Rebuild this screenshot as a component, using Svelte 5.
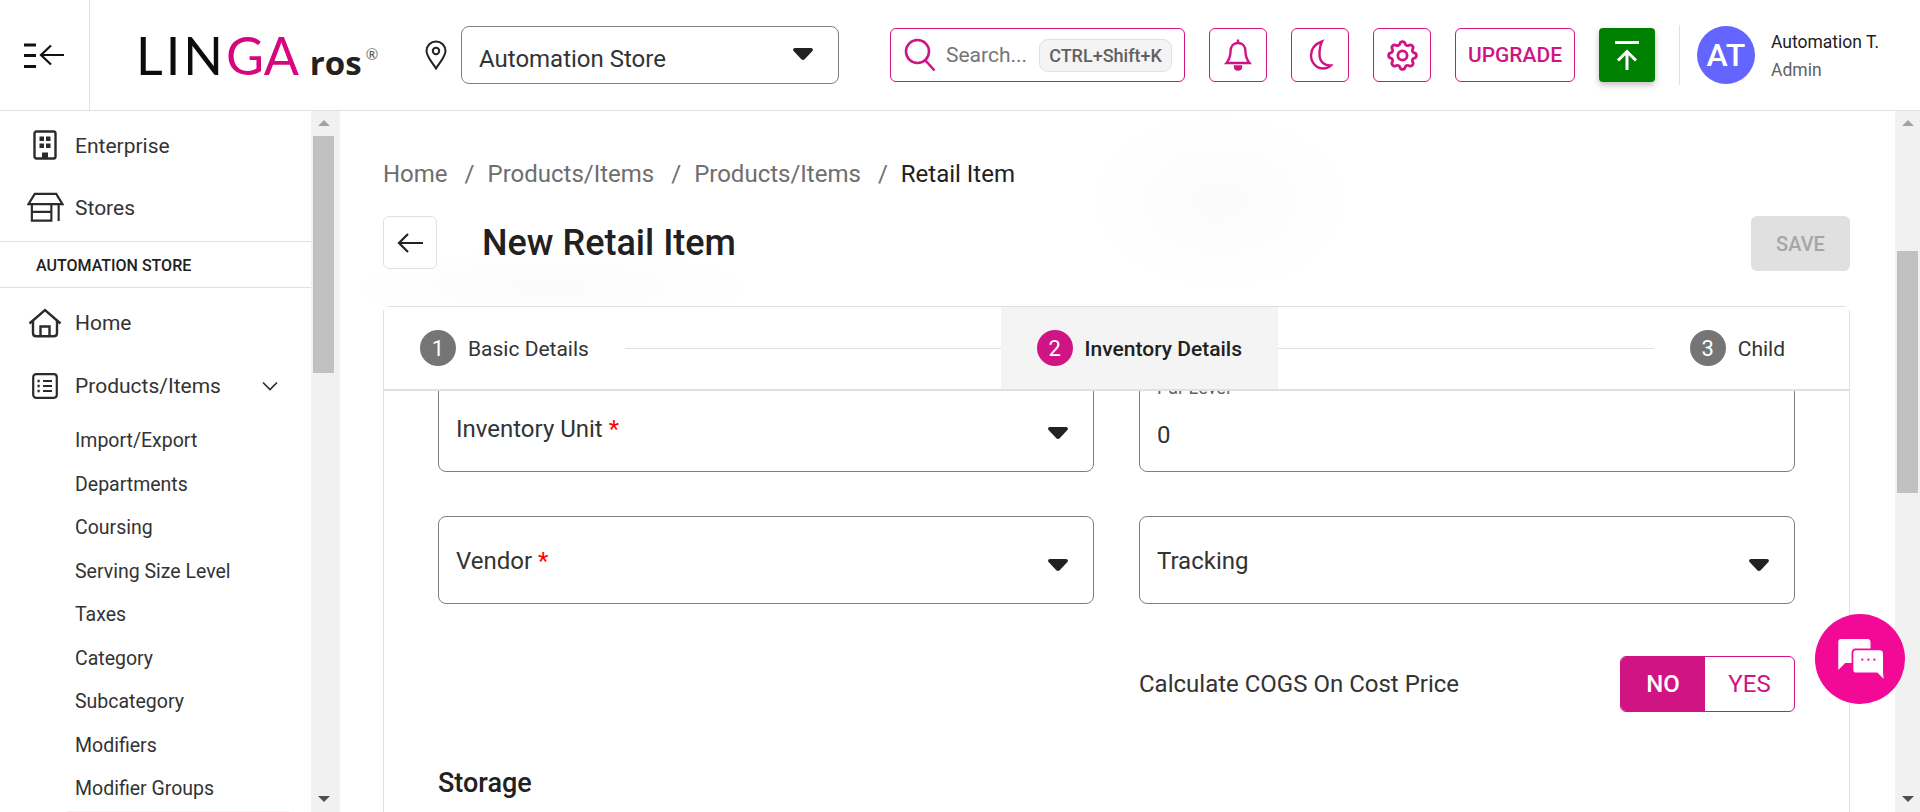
<script>
  const topItems = [
    { name: 'Enterprise', icon: 'building' },
    { name: 'Stores', icon: 'store' },
  ];
  const subItems = ['Import/Export', 'Departments', 'Coursing', 'Serving Size Level', 'Taxes', 'Category', 'Subcategory', 'Modifiers', 'Modifier Groups'];
  const crumbs = ['Home', 'Products/Items', 'Products/Items'];
</script>

<div class="app">
  <!-- Header -->
  <header class="header">
    <div class="menu-cell">
      <svg width="42" height="26" viewBox="0 0 42 26" fill="none" stroke="#111" stroke-width="2.2">
        <path d="M1 3h12M1 13.500h12M1 24.500h12" stroke-width="3"/>
        <path d="M41 13H18.500M28 3.500L18 13l10 9.500"/>
      </svg>
    </div>
    <div class="logo"><span class="logo-black">LIN</span><span class="logo-pink">GA</span><span class="logo-ros">ros</span><span class="logo-reg">®</span></div>
    <svg class="pin" width="24" height="30" viewBox="0 0 24 30" fill="none" stroke="#222" stroke-width="2">
      <path d="M12 28.500C8 22 2.500 16.500 2.500 11a9.500 9.500 0 0 1 19 0c0 5.500-5.500 11-9.500 17.500z"/>
      <circle cx="12" cy="11" r="3.200"/>
    </svg>
    <div class="store-select">
      <span class="store-name">Automation Store</span>
      <svg class="caret" width="20" height="12" viewBox="0 0 20 12"><path d="M2 0h16c1.700 0 2.500 1.600 1.400 2.900l-7.700 8.300c-.9 1-2.500 1-3.400 0L.6 2.900C-.5 1.600.3 0 2 0z" fill="#222"/></svg>
    </div>
    <div class="search">
      <svg width="34" height="34" viewBox="0 0 34 34" fill="none" stroke="#d01484" stroke-width="2.600">
        <circle cx="14.500" cy="13.500" r="11.500"/><path d="M22.500 22.500l9 10"/>
      </svg>
      <span class="search-text">Search...</span>
      <span class="kbd">CTRL+Shift+K</span>
    </div>
    <button class="icon-btn">
      <svg width="30" height="34" viewBox="0 0 30 34" fill="none" stroke="#d01484" stroke-width="2.400">
        <path d="M15 5c-5 0-7.500 4-7.500 8.500 0 6-2 9-4 11.500h23c-2-2.500-4-5.500-4-11.500C22.500 9 20 5 15 5z"/>
        <path d="M15 1.500V5" /><path d="M12 28.500h6c0 4-6 4-6 0z" fill="#d01484"/>
      </svg>
    </button>
    <button class="icon-btn">
      <svg width="26" height="32" viewBox="0 0 26 32" fill="none" stroke="#d01484" stroke-width="2.400">
        <path d="M15 2.500C8 5 4 10 4 16.500 4 24 10 29.500 16 29.500c3.500 0 6-1 8-3-6 .5-11.500-3.500-11.500-11 0-5 .5-9 2.500-13z"/>
      </svg>
    </button>
    <button class="icon-btn">
      <svg width="37" height="37" viewBox="0 0 24 24" fill="none" stroke="#d01484" stroke-width="1.800">
        <path d="M10.325 4.317c.426 -1.756 2.924 -1.756 3.350 0a1.724 1.724 0 0 0 2.573 1.066c1.543 -.94 3.310 .826 2.370 2.370a1.724 1.724 0 0 0 1.065 2.572c1.756 .426 1.756 2.924 0 3.350a1.724 1.724 0 0 0 -1.066 2.573c.94 1.543 -.826 3.310 -2.370 2.370a1.724 1.724 0 0 0 -2.572 1.065c-.426 1.756 -2.924 1.756 -3.350 0a1.724 1.724 0 0 0 -2.573 -1.066c-1.543 .94 -3.310 -.826 -2.370 -2.370a1.724 1.724 0 0 0 -1.065 -2.572c-1.756 -.426 -1.756 -2.924 0 -3.350a1.724 1.724 0 0 0 1.066 -2.573c-.94 -1.543 .826 -3.310 2.370 -2.370c1 .608 2.296 .07 2.572 -1.065z"/>
        <circle cx="12" cy="12" r="3"/>
      </svg>
    </button>
    <button class="upgrade">UPGRADE</button>
    <button class="publish">
      <svg width="26" height="30" viewBox="0 0 26 30" fill="none" stroke="#fff" stroke-width="3">
        <path d="M1 2.500h24"/><path d="M13 30V11M4 20.500L13 11.500l9 9"/>
      </svg>
    </button>
    <div class="vr"></div>
    <div class="avatar">AT</div>
    <div class="user">
      <div class="user-name">Automation T.</div>
      <div class="user-role">Admin</div>
    </div>
  </header>

  <div class="body">
    <!-- Sidebar -->
    <aside class="sidebar">
      <nav class="nav">
        {#each topItems as item}
          <div class="nav-row">
            <span class="nav-icon">
              {#if item.icon === 'building'}
                <svg width="24" height="30" viewBox="0 0 24 30" fill="none" stroke="#2b2b2b" stroke-width="2.400">
                  <rect x="1.500" y="1.500" width="21" height="27" rx="2"/>
                  <path d="M6.500 6.500h4.500v4.500H6.500zM13 6.500h4.500v4.500H13zM6.500 13.500h4.500v4.500H6.500zM13 13.500h4.500v4.500H13zM9 28.500V22.500h6v6z" fill="#2b2b2b" stroke="none"/>
                </svg>
              {:else}
                <svg width="37" height="30" viewBox="0 0 38 30" fill="none" stroke="#2b2b2b" stroke-width="2.200">
                  <path d="M8 1.500h22l6.500 10.500h-35z"/>
                  <path d="M5 12v17h20V12M5 20h20M32.500 12v17.500"/>
                </svg>
              {/if}
            </span>
            <span class="nav-text">{item.name}</span>
          </div>
        {/each}
        <div class="nav-section">AUTOMATION STORE</div>
        <div class="nav-row tall">
          <span class="nav-icon">
            <svg width="34" height="30" viewBox="0 0 34 30" fill="none" stroke="#2b2b2b" stroke-width="2.400">
              <path d="M1.500 15.500L17 2l15.500 13.500"/>
              <path d="M5 12.500V25c0 2 1.200 3.300 3.300 3.300h17.400c2.100 0 3.300-1.300 3.300-3.300V12.500"/>
              <path d="M12.500 28V18.500h9V28"/>
            </svg>
          </span>
          <span>Home</span>
        </div>
        <div class="nav-row tall">
          <span class="nav-icon">
            <svg width="26" height="26" viewBox="0 0 26 26" fill="none" stroke="#2b2b2b" stroke-width="2.200">
              <rect x="1.200" y="1.200" width="23.600" height="23.600" rx="3"/>
              <path d="M11 8h9M11 13h9M11 18h9"/>
              <path d="M5.500 8h2.200M5.500 13h2.200M5.500 18h2.200" stroke-width="2.600"/>
            </svg>
          </span>
          <span>Products/Items</span>
          <svg class="chevron" width="16" height="10" viewBox="0 0 16 10" fill="none" stroke="#2b2b2b" stroke-width="1.600"><path d="M1 1.500l7 7 7-7"/></svg>
        </div>
        <div class="sub-list">
          {#each subItems as sub}
            <div class="sub-row">{sub}</div>
          {/each}
          <div class="sub-active"></div>
        </div>
      </nav>
      <div class="scrollbar">
        <span class="arrow-up"></span>
        <div class="thumb side-thumb"></div>
        <span class="arrow-down"></span>
      </div>
    </aside>

    <!-- Main -->
    <main class="main">
      <div class="content">
        <div class="breadcrumb">
          {#each crumbs as c}
            <span>{c}</span><span class="sep">/</span>
          {/each}
          <span class="current">Retail Item</span>
        </div>
        <div class="title-row">
          <button class="back" aria-label="Back">
            <svg width="26" height="20" viewBox="0 0 26 20" fill="none" stroke="#222" stroke-width="2.200"><path d="M26 10H2M11 1l-9 9 9 9"/></svg>
          </button>
          <h1>New Retail Item</h1>
          <button class="save">SAVE</button>
        </div>

        <section class="card">
          <div class="stepper">
            <div class="step"><span class="num">1</span><span class="step-text">Basic Details</span></div>
            <div class="line"></div>
            <div class="step active"><span class="num">2</span><span class="step-text">Inventory Details</span></div>
            <div class="line"></div>
            <div class="step"><span class="num">3</span><span class="step-text">Child</span></div>
          </div>
          <div class="form">
            <div class="grid">
              <div class="field">
                <span class="label">Inventory Unit <em>*</em></span>
                <svg class="caret" width="20" height="12" viewBox="0 0 20 12"><path d="M2 0h16c1.700 0 2.500 1.600 1.400 2.900l-7.700 8.300c-.9 1-2.500 1-3.400 0L.6 2.900C-.5 1.600.3 0 2 0z" fill="#222"/></svg>
              </div>
              <div class="field input">
                <span class="mini">Par Level</span>
                <span class="value">0</span>
              </div>
              <div class="field">
                <span class="label">Vendor <em>*</em></span>
                <svg class="caret" width="20" height="12" viewBox="0 0 20 12"><path d="M2 0h16c1.700 0 2.500 1.600 1.400 2.900l-7.700 8.300c-.9 1-2.500 1-3.400 0L.6 2.900C-.5 1.600.3 0 2 0z" fill="#222"/></svg>
              </div>
              <div class="field">
                <span class="label">Tracking</span>
                <svg class="caret" width="20" height="12" viewBox="0 0 20 12"><path d="M2 0h16c1.700 0 2.500 1.600 1.400 2.900l-7.700 8.300c-.9 1-2.500 1-3.400 0L.6 2.900C-.5 1.600.3 0 2 0z" fill="#222"/></svg>
              </div>
              <div class="cogs">
                <span>Calculate COGS On Cost Price</span>
                <div class="toggle">
                  <span class="opt on">NO</span>
                  <span class="opt">YES</span>
                </div>
              </div>
            </div>
            <h2>Storage</h2>
          </div>
        </section>
      </div>
      <div class="scrollbar main-bar">
        <span class="arrow-up"></span>
        <div class="thumb page-thumb"></div>
        <span class="arrow-down"></span>
      </div>
      <button class="chat" aria-label="Chat">
        <svg width="47" height="43" viewBox="0 0 54 50">
          <path d="M3 0h31c2 0 3.500 1.500 3.500 3.500V28H8L0 36V3C0 1.500 1.500 0 3 0z" fill="#fff"/>
          <path d="M20 12h28c3 0 5 2 5 5v22l1 10-9-9H20c-2 0-3.500-2-3.500-4V16c0-2 1.500-4 3.500-4z" fill="#fff" stroke="#f20a97" stroke-width="2"/>
          <circle cx="28" cy="24" r="1.300" fill="#f20a97"/><circle cx="35" cy="24" r="1.300" fill="#f20a97"/><circle cx="42" cy="24" r="1.300" fill="#f20a97"/>
        </svg>
      </button>
    </main>
  </div>
</div>

<style>
  :global(body) {
    margin: 0;
    font-family: Roboto, 'Liberation Sans', sans-serif;
    color: #212121;
    background: #fff;
    overflow: hidden;
  }

  .app {
    width: 1920px;
    height: 812px;
    display: flex;
    flex-direction: column;
    overflow: hidden;
  }

  button {
    font-family: inherit;
    background: #fff;
    padding: 0;
    cursor: pointer;
  }

  /* Header */
  .header {
    height: 110px;
    flex: none;
    display: flex;
    align-items: center;
    border-bottom: 1px solid #e0e0e0;
  }

  .menu-cell {
    width: 90px;
    height: 100%;
    flex: none;
    display: flex;
    align-items: center;
    padding-left: 23px;
    box-sizing: border-box;
    border-right: 1px solid #e0e0e0;
  }

  .logo {
    width: 288px;
    margin-left: 46px;
    flex: none;
    display: flex;
    align-items: baseline;
    font-family: Lato, sans-serif;
    font-size: 52px;
    line-height: 1;
  }

  .logo-black { color: #0b0b0b; letter-spacing: 3px; }
  .logo-pink { color: #d6067f; letter-spacing: 0; }
  .logo-ros { font-family: 'Open Sans', sans-serif; font-weight: 700; font-size: 33px; margin-left: 11px; color: #222; }
  .logo-reg { font-size: 15px; color: #555; align-self: flex-start; margin: 18px 0 0 4px; }

  .pin { flex: none; }

  .store-select {
    width: 378px;
    height: 58px;
    margin-left: 13px;
    flex: none;
    box-sizing: border-box;
    border: 1px solid #7a7f87;
    border-radius: 8px;
    display: flex;
    align-items: center;
    justify-content: space-between;
    padding: 0 25px 0 17px;
    font-size: 24px;
    color: #333;
  }

  .store-name { margin-top: 7px; }
  .store-select .caret { margin-top: -2px; }

  .search {
    width: 295px;
    height: 54px;
    margin-left: 51px;
    flex: none;
    box-sizing: border-box;
    border: 1px solid #d01484;
    border-radius: 6px;
    display: flex;
    align-items: center;
    padding: 0 12px;
  }

  .search-text {
    margin-left: 9px;
    font-size: 21px;
    color: #757575;
  }

  .kbd {
    margin-left: auto;
    width: 133px;
    height: 33px;
    box-sizing: border-box;
    display: flex;
    align-items: center;
    justify-content: center;
    background: #f4f4f4;
    border: 1px solid #e0e0e0;
    border-radius: 9px;
    font-size: 18px;
    font-weight: 500;
    color: #616161;
    white-space: nowrap;
  }

  .icon-btn {
    width: 58px;
    height: 54px;
    margin-left: 24px;
    flex: none;
    border: 1px solid #d01484;
    border-radius: 6px;
    display: flex;
    align-items: center;
    justify-content: center;
  }

  .upgrade {
    width: 120px;
    height: 54px;
    margin-left: 24px;
    flex: none;
    border: 1px solid #d01484;
    border-radius: 6px;
    color: #d01484;
    font-size: 21px;
    font-weight: 500;
  }

  .publish {
    width: 56px;
    height: 54px;
    margin-left: 24px;
    flex: none;
    border: none;
    border-radius: 4px;
    background: #008000;
    box-shadow: 0 3px 6px rgba(0, 0, 0, 0.25);
    display: flex;
    align-items: center;
    justify-content: center;
  }

  .vr {
    width: 1px;
    height: 60px;
    margin-left: 24px;
    background: #e0e0e0;
    flex: none;
  }

  .avatar {
    width: 58px;
    height: 58px;
    margin-left: 17px;
    flex: none;
    border-radius: 50%;
    background: #6464ff;
    color: #fff;
    font-size: 32px;
    font-weight: 500;
    display: flex;
    align-items: center;
    justify-content: center;
  }

  .user {
    margin-left: 16px;
    white-space: nowrap;
    margin-top: 2px;
  }

  .user-name { font-size: 17.500px; line-height: 24px; color: #212121; }
  .user-role { font-size: 17.500px; line-height: 24px; margin-top: 4px; color: #616161; }

  /* Sidebar */
  .body {
    flex: 1;
    min-height: 0;
    display: flex;
  }

  .sidebar {
    width: 340px;
    flex: none;
    display: flex;
    overflow: hidden;
  }

  .nav {
    width: 311px;
    flex: none;
    padding-top: 3px;
    box-sizing: border-box;
    font-size: 19.500px;
    color: #333;
  }

  .nav-row {
    height: 62px;
    display: flex;
    align-items: center;
    font-size: 21px;
  }

  .nav-row.tall { height: 63px; }

  .nav-text { margin-top: 1px; }

  .nav-icon {
    width: 75px;
    flex: none;
    display: flex;
    justify-content: center;
    padding-left: 15px;
    box-sizing: border-box;
  }

  .chevron {
    margin-left: 41px;
  }

  .nav-section {
    margin: 3px 0 3px;
    border-top: 1px solid #e0e0e0;
    border-bottom: 1px solid #e0e0e0;
    padding: 2px 0 0 36px;
    height: 43px;
    display: flex;
    align-items: center;
    font-size: 16px;
    font-weight: 500;
    color: #212121;
  }

  .sub-list {
    padding: 2px 0 0 75px;
  }

  .sub-row {
    height: 43.500px;
    line-height: 43.500px;
  }

  .sub-active {
    height: 10px;
    margin: 0 19px 0 -11px;
    background: #fdeef5;
    border-radius: 8px;
  }

  .scrollbar {
    width: 29px;
    flex: none;
    background: #f1f1f1;
    position: relative;
  }

  .thumb {
    position: absolute;
    left: 2px;
    right: 8px;
    background: #c1c1c1;
  }

  .side-thumb { top: 25px; height: 237px; right: 6px; }

  .arrow-up, .arrow-down {
    position: absolute;
    left: 7px;
    width: 0;
    height: 0;
    border-left: 6px solid transparent;
    border-right: 6px solid transparent;
  }

  .arrow-up { top: 9px; border-bottom: 6px solid #a3a3a3; }
  .arrow-down { bottom: 10px; border-top: 6px solid #505050; }

  /* Main */
  .main {
    flex: 1;
    min-width: 0;
    display: flex;
    position: relative;
    overflow: hidden;
    background:
      radial-gradient(ellipse 130px 90px at 880px 90px, #fcfbfb, transparent),
      radial-gradient(ellipse 200px 40px at 210px 176px, #fbfbfb, transparent);
  }

  .content {
    flex: 1;
    min-width: 0;
    padding: 47px 45px 0 43px;
  }

  .breadcrumb {
    height: 32px;
    display: flex;
    align-items: center;
    font-size: 24px;
    color: #6e6e6e;
  }

  .sep { margin: 0 13px 0 17px; }
  .current { color: #212121; }

  .title-row {
    margin-top: 26px;
    height: 55px;
    display: flex;
    align-items: flex-start;
  }

  .back {
    width: 54px;
    height: 53px;
    border: 1px solid #e0e0e0;
    border-radius: 6px;
    display: flex;
    align-items: center;
    justify-content: center;
  }

  h1 {
    margin: 0 0 0 45px;
    height: 55px;
    line-height: 55px;
    font-size: 36px;
    font-weight: 500;
    flex: 1;
    color: #212121;
  }

  .save {
    width: 99px;
    height: 55px;
    border: none;
    border-radius: 6px;
    background: #e0e0e0;
    color: #a6a6a6;
    font-size: 20px;
    font-weight: 500;
  }

  .card {
    margin-top: 35px;
    height: 600px;
    box-sizing: border-box;
    border: 1px solid #e0e0e0;
    border-bottom: none;
    border-radius: 6px 6px 0 0;
    background: #fff;
  }

  .stepper {
    height: 84px;
    box-sizing: border-box;
    border-bottom: 2px solid #e0e0e0;
    display: flex;
    align-items: center;
    padding-right: 28px;
    position: relative;
    z-index: 1;
    background: #fff;
  }

  .step {
    height: 100%;
    display: flex;
    align-items: center;
    gap: 12px;
    padding: 0 36px;
    font-size: 21px;
    color: #333;
    flex: none;
  }

  .step-text { margin-top: 2px; }

  .step.active {
    background: #f4f4f4;
    font-weight: 500;
    color: #212121;
  }

  .num {
    width: 36px;
    height: 36px;
    border-radius: 50%;
    background: #757575;
    color: #fff;
    font-size: 22px;
    display: flex;
    align-items: center;
    justify-content: center;
    font-weight: 400;
  }

  .step.active .num { background: #d01484; }

  .line {
    flex: 1;
    height: 1px;
    background: #e0e0e0;
  }

  .form {
    padding: 0 55px 0 54px;
    height: 500px;
    overflow: hidden;
  }

  .grid {
    display: grid;
    grid-template-columns: 656px 656px;
    column-gap: 45px;
    row-gap: 44px;
    margin-top: -7px;
  }

  .field {
    height: 88px;
    box-sizing: border-box;
    border: 1px solid #7a7f87;
    border-radius: 8px;
    display: flex;
    align-items: center;
    justify-content: space-between;
    padding: 0 25px 0 17px;
    position: relative;
    background: #fff;
  }

  .label {
    font-size: 24px;
    color: #333;
    margin-top: 2px;
  }

  .label em {
    color: #f00;
    font-style: normal;
  }

  .field .caret { margin-top: 10px; }

  .field.input {
    display: block;
  }

  .mini {
    display: block;
    margin-top: -6px;
    height: 18px;
    line-height: 18px;
    font-size: 18px;
    color: #616161;
  }

  .value {
    display: block;
    margin-top: 24px;
    font-size: 24px;
    line-height: 28px;
    color: #333;
  }

  .cogs {
    grid-column: 2;
    margin-top: 8px;
    height: 56px;
    display: flex;
    align-items: center;
    justify-content: space-between;
    font-size: 24px;
    color: #333;
  }

  .toggle {
    width: 175px;
    height: 56px;
    box-sizing: border-box;
    border: 1px solid #d01484;
    border-radius: 6px;
    display: flex;
    overflow: hidden;
    font-size: 24px;
    color: #d01484;
  }

  .opt {
    flex: 1;
    display: flex;
    align-items: center;
    justify-content: center;
  }

  .opt.on {
    flex: none;
    width: 84px;
    background: #d01484;
    color: #fff;
    font-weight: 500;
  }

  h2 {
    margin: 56px 0 0;
    font-size: 27px;
    line-height: 30px;
    font-weight: 500;
    color: #212121;
  }

  .main-bar {
    width: 25px;
  }

  .page-thumb {
    top: 140px;
    height: 242px;
    left: 2px;
    right: 2px;
  }

  .chat {
    position: absolute;
    left: 1475px;
    top: 503px;
    width: 90px;
    height: 90px;
    border: none;
    border-radius: 50%;
    background: #f20a97;
    display: flex;
    align-items: center;
    justify-content: center;
    padding: 2px 0 0 2px;
  }
</style>
